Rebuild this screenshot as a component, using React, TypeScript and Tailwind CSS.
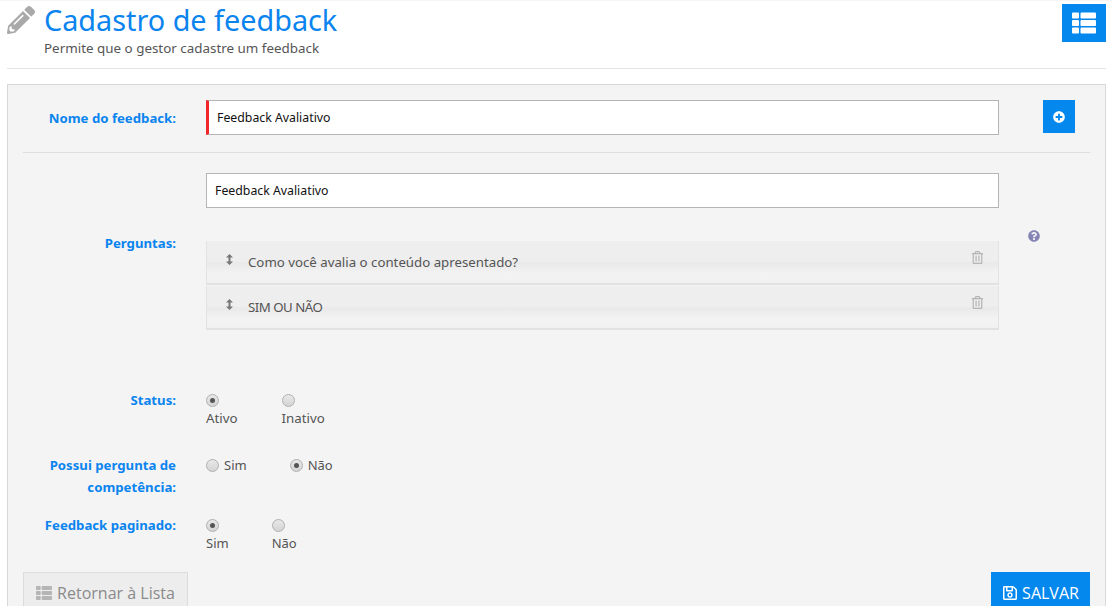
import React from "react";
import { FaPencilAlt, FaThList, FaPlusCircle, FaQuestionCircle, FaRegTrashAlt, FaRegSave } from "react-icons/fa";

const Label = ({ children }: { children: React.ReactNode }) => (
  <div className="w-[153px] shrink-0 text-right font-bold text-[13.2px] leading-[22px] text-[#0a84ee]">{children}</div>
);

const Radio = ({ on }: { on?: boolean }) => (
  <span className="inline-flex w-[13px] h-[13px] shrink-0 items-center justify-center rounded-full border border-[#b0b0b0] bg-gradient-to-b from-[#e8e8e8] to-[#d4d4d4]">
    {on && <span className="w-[5px] h-[5px] rounded-full bg-[#555]" />}
  </span>
);

const Question = ({ text, caps }: { text: string; caps?: boolean }) => (
  <div className="relative h-[44px] w-[793px] border-b-2 border-l border-r border-[#e2e2e2] bg-[linear-gradient(to_bottom,#eeeeee_0,#eeeeee_48%,#e9e9e9_52%,#f3f3f3_78%,#f1f1f1_100%)] flex items-start text-[13.25px] text-[#555]">
    <svg className="mt-[13px] ml-[19px] shrink-0" width="7" height="11" viewBox="0 0 7 11" fill="#777">
      <path d="M3.5 0 7 3.5H4.5v4H7L3.5 11 0 7.5h2.5v-4H0z" />
    </svg>
    <span className={caps ? "ml-[15px] mt-[11px] leading-[20px] tracking-[-0.5px]" : "ml-[15px] mt-[11px] leading-[20px]"}>{text}</span>
    <FaRegTrashAlt className="absolute right-[14px] top-[10px] text-[#b5b5b5]" size={13} />
  </div>
);

export default function App() {
  return (
    <div className="h-[606px] w-[1112px] overflow-hidden bg-white font-['Noto_Sans','DejaVu_Sans',sans-serif] text-[#555]">
      <div className="h-[1px] bg-[#f5f5f5]" />
      <div className="mx-[7px] w-[1099px] h-[68px] border-b border-[#e3e3e3] flex">
        <FaPencilAlt className="mt-[5px] text-[#a9a9a9]" size={28} />
        <div className="ml-[9px] flex-1">
          <div className="mt-[-1px] text-[28.8px] leading-[40px] text-[#0a84ee]">Cadastro de feedback</div>
          <div className="mt-[-2px] text-[13.4px] leading-[20px] text-[#555]">Permite que o gestor cadastre um feedback</div>
        </div>
        <div className="mt-[3px] w-[44px] h-[38px] bg-[#0588ee] flex items-center justify-center text-white">
          <FaThList size={24} />
        </div>
      </div>

      <div className="mx-[7px] mt-[15px] w-[1099px] h-[540px] border border-[#d8d8d8] bg-[#f4f4f4] px-[15px] pt-[15px]">
        <div className="flex items-start border-b border-[#dddddd] h-[53px] w-[1067px]">
          <Label><span className="block mt-[7px]">Nome do feedback:</span></Label>
          <div className="ml-[30px] w-[793px] h-[35px] bg-white border border-[#b5b5b5] border-l-[3px] border-l-[#f0262b] pl-[8px] text-[12.3px] leading-[33px] text-[#111]">Feedback Avaliativo</div>
          <div className="ml-[44px] w-[32px] h-[33px] bg-[#0588ee] flex items-center justify-center text-white">
            <FaPlusCircle size={12} />
          </div>
        </div>

        <div className="flex mt-[20px] w-[1067px]">
          <div className="pt-[59px]"><Label>Perguntas:</Label></div>
          <div className="ml-[30px] w-[793px]">
            <div className="h-[35px] bg-white border border-[#b5b5b5] pl-[8px] text-[12.3px] leading-[33px] text-[#111]">Feedback Avaliativo</div>
            <div className="mt-[33px] flex flex-col gap-[1px]">
              <Question text="Como você avalia o conteúdo apresentado?" />
              <Question text="SIM OU NÃO" caps />
            </div>
          </div>
          <FaQuestionCircle className="ml-[29px] mt-[57px] text-[#8585b5]" size={12} />
        </div>

        <div className="flex mt-[59px]">
          <Label>Status:</Label>
          <div className="ml-[30px] pt-[5px] flex gap-[44px] text-[13.3px] text-[#555]">
            <div className="flex flex-col items-start"><Radio on /><span className="mt-[1px] leading-[20px]">Ativo</span></div>
            <div className="flex flex-col items-start"><Radio /><span className="mt-[1px] leading-[20px]">Inativo</span></div>
          </div>
        </div>

        <div className="flex mt-[26px]">
          <Label>Possui pergunta de competência:</Label>
          <div className="ml-[30px] flex items-start gap-[43px] text-[13px] text-[#555]">
            <div className="flex items-center gap-[5px] h-[23px]"><Radio /><span>Sim</span></div>
            <div className="flex items-center gap-[5px] h-[23px]"><Radio on /><span>Não</span></div>
          </div>
        </div>

        <div className="flex mt-[16px]">
          <Label>Feedback paginado:</Label>
          <div className="ml-[30px] pt-[5px] flex gap-[43px] text-[13px] text-[#555]">
            <div className="flex flex-col items-start"><Radio on /><span className="mt-[1px] leading-[20px]">Sim</span></div>
            <div className="flex flex-col items-start"><Radio /><span className="mt-[1px] leading-[20px]">Não</span></div>
          </div>
        </div>

        <div className="flex justify-between mt-[19px] w-[1067px] font-['Open_Sans',sans-serif]">
          <div className="flex items-center gap-[5px] w-[165px] h-[42px] justify-center border border-[#dcdcdc] bg-[#ededed] text-[16px] text-[#8a8a8a]">
            <FaThList size={16} className="text-[#b5b5b5]" />
            <span>Retornar à Lista</span>
          </div>
          <div className="flex items-center gap-[4px] w-[99px] h-[42px] justify-center bg-[#0588ee] text-[16px] text-white">
            <FaRegSave size={16} />
            <span>SALVAR</span>
          </div>
        </div>
      </div>
    </div>
  );
}
